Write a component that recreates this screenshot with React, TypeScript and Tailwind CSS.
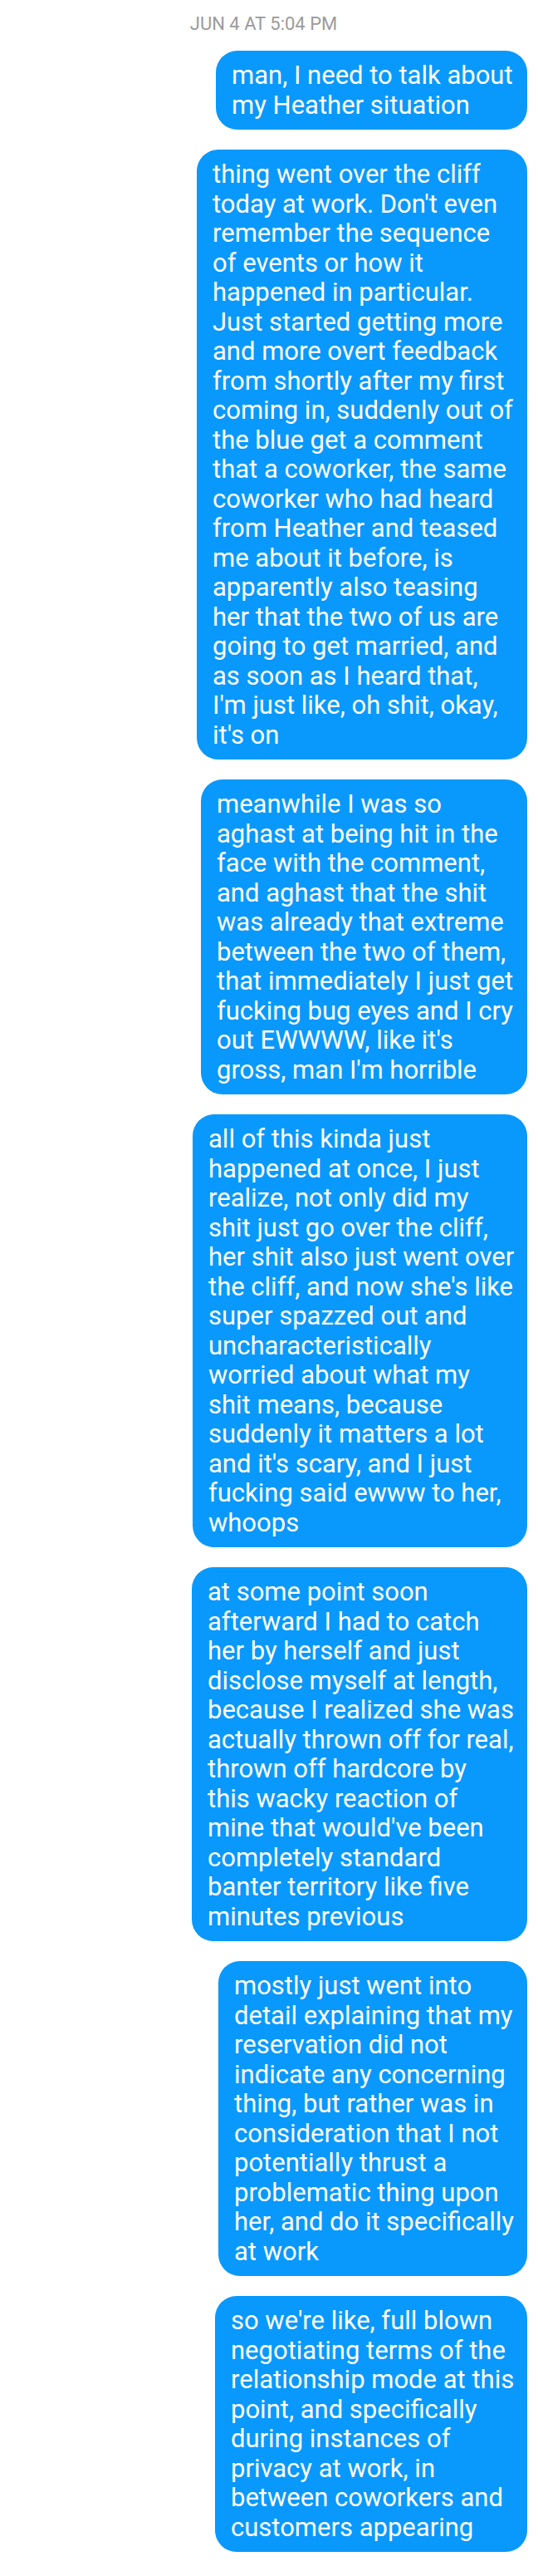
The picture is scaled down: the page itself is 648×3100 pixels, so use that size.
const messages = [
  {
    width: "w-[375px]",
    lines: ["man, I need to talk about", "my Heather situation"],
  },
  {
    width: "w-[398px]",
    lines: [
      "thing went over the cliff",
      "today at work. Don't even",
      "remember the sequence",
      "of events or how it",
      "happened in particular.",
      "Just started getting more",
      "and more overt feedback",
      "from shortly after my first",
      "coming in, suddenly out of",
      "the blue get a comment",
      "that a coworker, the same",
      "coworker who had heard",
      "from Heather and teased",
      "me about it before, is",
      "apparently also teasing",
      "her that the two of us are",
      "going to get married, and",
      "as soon as I heard that,",
      "I'm just like, oh shit, okay,",
      "it's on",
    ],
  },
  {
    width: "w-[393px]",
    lines: [
      "meanwhile I was so",
      "aghast at being hit in the",
      "face with the comment,",
      "and aghast that the shit",
      "was already that extreme",
      "between the two of them,",
      "that immediately I just get",
      "fucking bug eyes and I cry",
      "out EWWWW, like it's",
      "gross, man I'm horrible",
    ],
  },
  {
    width: "w-[403px]",
    lines: [
      "all of this kinda just",
      "happened at once, I just",
      "realize, not only did my",
      "shit just go over the cliff,",
      "her shit also just went over",
      "the cliff, and now she's like",
      "super spazzed out and",
      "uncharacteristically",
      "worried about what my",
      "shit means, because",
      "suddenly it matters a lot",
      "and it's scary, and I just",
      "fucking said ewww to her,",
      "whoops",
    ],
  },
  {
    width: "w-[404px]",
    lines: [
      "at some point soon",
      "afterward I had to catch",
      "her by herself and just",
      "disclose myself at length,",
      "because I realized she was",
      "actually thrown off for real,",
      "thrown off hardcore by",
      "this wacky reaction of",
      "mine that would've been",
      "completely standard",
      "banter territory like five",
      "minutes previous",
    ],
  },
  {
    width: "w-[372px]",
    lines: [
      "mostly just went into",
      "detail explaining that my",
      "reservation did not",
      "indicate any concerning",
      "thing, but rather was in",
      "consideration that I not",
      "potentially thrust a",
      "problematic thing upon",
      "her, and do it specifically",
      "at work",
    ],
  },
  {
    width: "w-[376px]",
    lines: [
      "so we're like, full blown",
      "negotiating terms of the",
      "relationship mode at this",
      "point, and specifically",
      "during instances of",
      "privacy at work, in",
      "between coworkers and",
      "customers appearing",
    ],
  },
];

export default function App() {
  return (
    <div className="min-h-[3100px] w-full bg-white font-['Roboto',sans-serif]">
      <div className="flex flex-col pt-4 pr-[13px]">
        {/* Timestamp */}
        <p className="text-center text-[22px] leading-[26px] text-[#9b9b9b]">
          JUN 4 AT 5:04 PM
        </p>

        {/* Bubbles */}
        <div className="mt-[19px] flex flex-col items-end gap-6">
          {messages.map((msg, i) => (
            <div
              key={i}
              className={`${msg.width} rounded-[26px] bg-[#0999fc] py-3 pl-[19px] pr-3 text-[31px] leading-[35.5px] text-white`}
            >
              {msg.lines.map((line, j) => (
                <span key={j} className="block whitespace-nowrap">
                  {line}
                </span>
              ))}
            </div>
          ))}
        </div>
      </div>
    </div>
  );
}
